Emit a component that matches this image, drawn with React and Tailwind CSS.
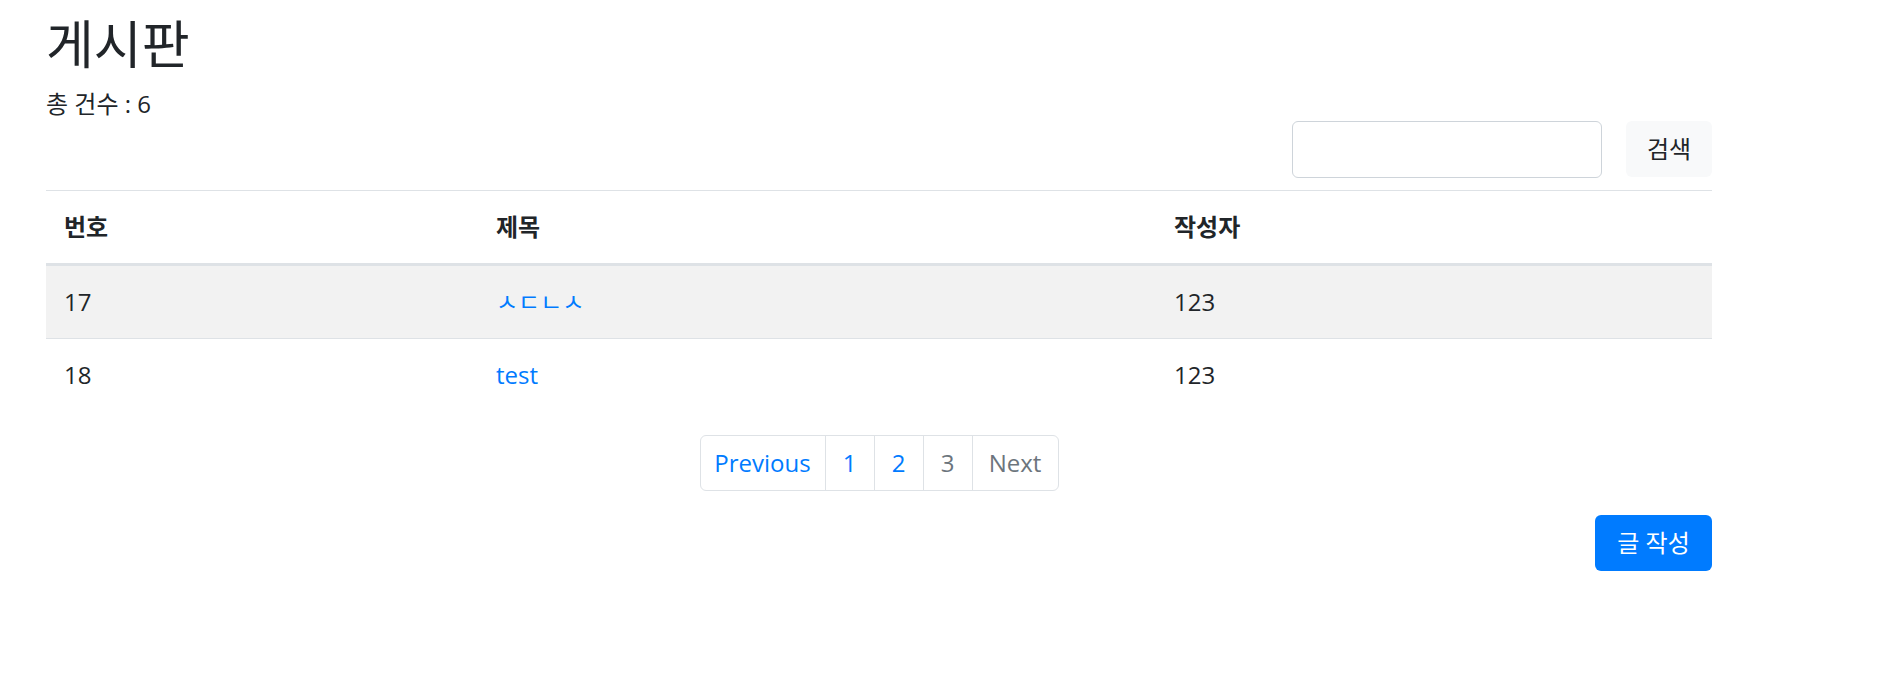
export default function App() {
  const rows = [
    { no: "17", title: "ㅅㄷㄴㅅ", writer: "123", striped: true },
    { no: "18", title: "test", writer: "123", striped: false },
  ];
  return (
    <div className="min-h-screen bg-white text-[#212529] font-['Open_Sans','Noto_Sans_CJK_KR',sans-serif]">
      <div className="ml-[46px] w-[1666px] pt-[15px]">
        <h2 className="text-[52px] leading-[58px] font-normal">게시판</h2>
        <div className="mt-[13px] flex items-start justify-between">
          <p className="text-[24px] leading-[36px]">총 건수 : 6</p>
          <div className="mt-[35px] flex gap-[24px]">
            <input
              type="text"
              className="w-[310px] h-[57px] border border-[#ced4da] rounded-[6px] px-[18px] text-[24px] outline-none"
            />
            <button className="w-[86px] h-[56px] bg-[#f8f9fa] rounded-[6px] text-[24px] leading-[36px] text-[#212529]">
              검색
            </button>
          </div>
        </div>

        <div className="mt-[12px] border-t border-[#dee2e6]">
          <div className="grid grid-cols-[432px_678px_556px] border-b-[3px] border-[#dee2e6] text-[24px] leading-[36px] font-bold">
            <div className="px-[18px] py-[18px]">번호</div>
            <div className="px-[18px] py-[18px]">제목</div>
            <div className="px-[18px] py-[18px]">작성자</div>
          </div>
          {rows.map((r, i) => (
            <div
              key={r.no}
              className={
                "grid grid-cols-[432px_678px_556px] text-[24px] leading-[36px] " +
                (r.striped ? "bg-[#f2f2f2] " : "bg-white ") +
                (i < rows.length - 1 ? "border-b border-[#dee2e6]" : "")
              }
            >
              <div className="px-[18px] py-[18px]">{r.no}</div>
              <div className="px-[18px] py-[18px]">
                <a href="#" className="text-[#007bff]">{r.title}</a>
              </div>
              <div className="px-[18px] py-[18px]">{r.writer}</div>
            </div>
          ))}
        </div>

        <div className="mt-[24px] flex justify-center">
          <div className="flex h-[56px] text-[24px] leading-[30px]">
            <a href="#" className="flex w-[126px] items-center justify-center border border-[#dee2e6] rounded-l-[6px] text-[#007bff]">Previous</a>
            <a href="#" className="-ml-px flex w-[50px] items-center justify-center border border-[#dee2e6] text-[#007bff]">1</a>
            <a href="#" className="-ml-px flex w-[50px] items-center justify-center border border-[#dee2e6] text-[#007bff]">2</a>
            <span className="-ml-px flex w-[50px] items-center justify-center border border-[#dee2e6] text-[#6c757d]">3</span>
            <span className="-ml-px flex w-[87px] items-center justify-center border border-[#dee2e6] rounded-r-[6px] text-[#6c757d]">Next</span>
          </div>
        </div>

        <div className="mt-[24px] flex justify-end">
          <button className="w-[117px] h-[56px] rounded-[6px] bg-[#007bff] text-white text-[24px] leading-[36px]">
            글 작성
          </button>
        </div>
      </div>
    </div>
  );
}
